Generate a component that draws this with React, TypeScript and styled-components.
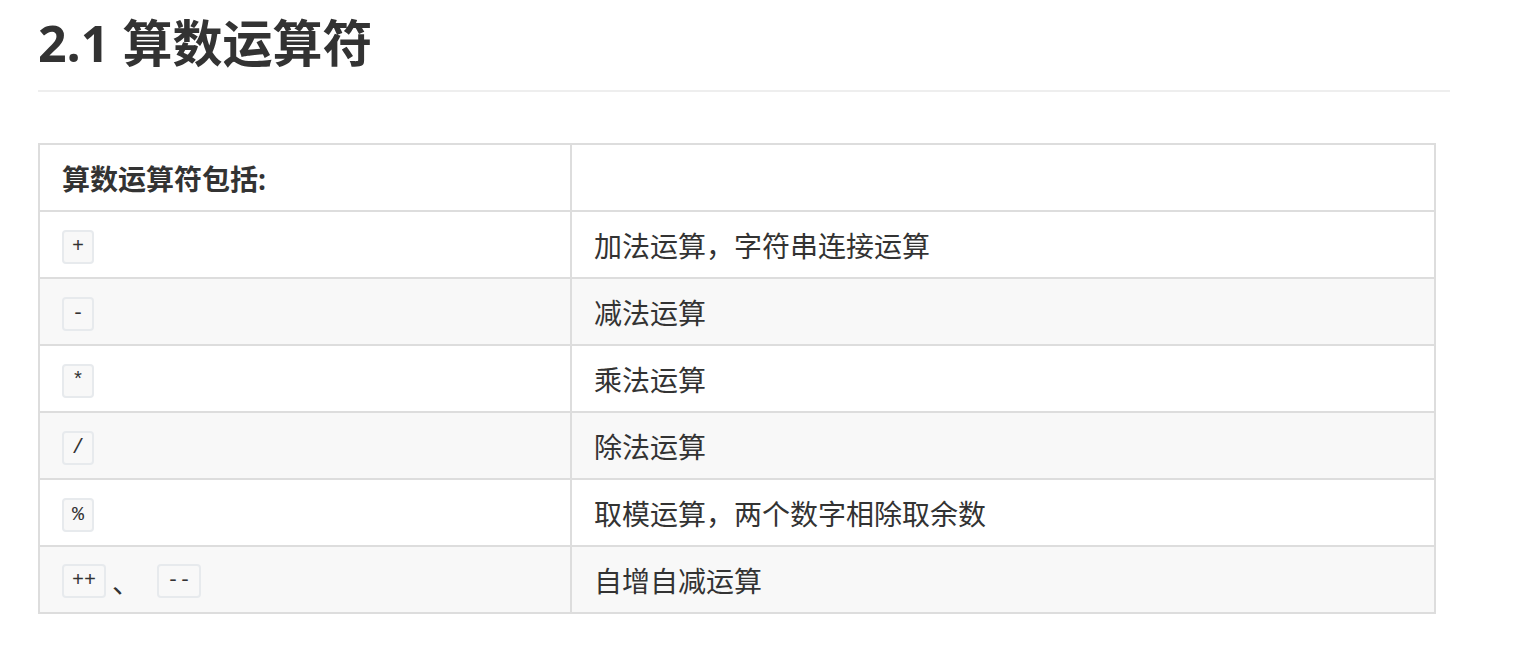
import styled, { createGlobalStyle } from "styled-components";

const GlobalStyle = createGlobalStyle`
  body {
    margin: 0;
    background: #ffffff;
    font-family: "Open Sans", "Noto Sans CJK SC", sans-serif;
    color: #333333;
  }
`;

const Page = styled.div`
  padding: 13px 75px 40px 38px;
`;

const Heading = styled.h2`
  margin: 0;
  padding-bottom: 17px;
  font-size: 50px;
  line-height: 60px;
  font-weight: 700;
  color: #333333;
  border-bottom: 2px solid #eeeeee;
`;

const Table = styled.table`
  margin-top: 51px;
  width: 1398px;
  border-collapse: collapse;
  font-size: 28px;
`;

const Row = styled.tr<{ $shaded?: boolean }>`
  background: ${(p) => (p.$shaded ? "#f8f8f8" : "#ffffff")};
`;

const HeadCell = styled.th`
  height: 65px;
  padding: 0 22px;
  border: 2px solid #dddddd;
  text-align: left;
  font-weight: 700;
  &:first-child {
    width: 486px;
  }
`;

const Cell = styled.td`
  height: 65px;
  padding: 0 22px 0 20px;
  border: 2px solid #dddddd;
  vertical-align: middle;
  & + & {
    padding-left: 22px;
  }
`;

const Code = styled.code`
  display: inline-block;
  min-width: 31px;
  height: 34px;
  padding: 0 8px;
  margin: 0 2px;
  box-sizing: border-box;
  border: 2px solid #e7eaed;
  border-radius: 4px;
  background: #f8f8f8;
  font-family: "Liberation Mono", "DejaVu Sans Mono", monospace;
  font-size: 20px;
  line-height: 30px;
  text-align: center;
  vertical-align: middle;
  color: #333333;
`;

const Sep = styled.span`
  display: inline-block;
  margin: 0 15px 0 4px;
  vertical-align: middle;
`;

const rows: { ops: string[]; desc: string }[] = [
  { ops: ["+"], desc: "加法运算，字符串连接运算" },
  { ops: ["-"], desc: "减法运算" },
  { ops: ["*"], desc: "乘法运算" },
  { ops: ["/"], desc: "除法运算" },
  { ops: ["%"], desc: "取模运算，两个数字相除取余数" },
  { ops: ["++", "--"], desc: "自增自减运算" },
];

export default function App() {
  return (
    <Page>
      <GlobalStyle />
      <Heading>2.1 算数运算符</Heading>
      <Table>
        <thead>
          <Row>
            <HeadCell>算数运算符包括:</HeadCell>
            <HeadCell></HeadCell>
          </Row>
        </thead>
        <tbody>
          {rows.map((r, i) => (
            <Row key={r.desc} $shaded={i % 2 === 1}>
              <Cell>
                {r.ops.map((op, j) => (
                  <span key={op}>
                    {j > 0 && <Sep>、</Sep>}
                    <Code>{op}</Code>
                  </span>
                ))}
              </Cell>
              <Cell>{r.desc}</Cell>
            </Row>
          ))}
        </tbody>
      </Table>
    </Page>
  );
}
